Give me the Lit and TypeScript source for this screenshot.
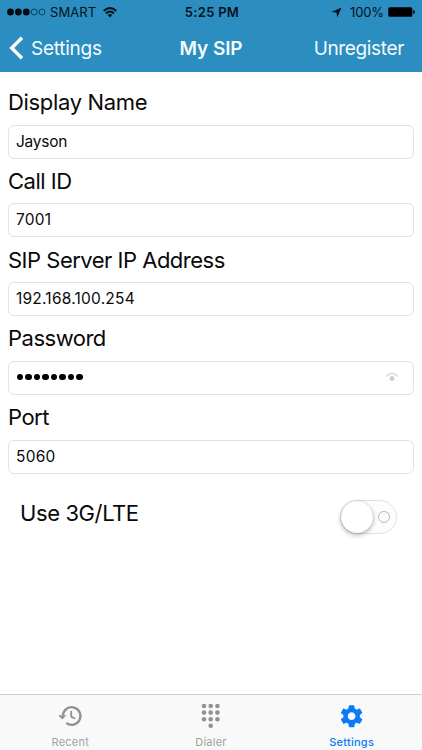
import { LitElement, html, css, svg } from "lit";
import { customElement, property } from "lit/decorators.js";

const clockIcon = svg`
  <path d="M5.9 12.2A8.8 8.8 0 1 1 9.3 20" fill="none" stroke="currentColor" stroke-width="2.3"/>
  <path d="M1.2 12.2H9.4L5.3 16.4Z" fill="currentColor"/>
  <path d="M14.2 8V13.6L18.2 15.8" fill="none" stroke="currentColor" stroke-width="1.8"/>`;

const dotsIcon = svg`${[
  [6, 3], [12.7, 3], [19.4, 3],
  [6, 9.6], [12.7, 9.6], [19.4, 9.6],
  [6, 16.2], [12.7, 16.2], [19.4, 16.2],
  [12.7, 22.8],
].map(([x, y]) => svg`<circle cx=${x} cy=${y} r="2.3" fill="currentColor"/>`)}`;

const gearIcon = svg`<path fill="currentColor" transform="translate(-.6 0) scale(1.1)" d="M19.43 12.98c.04-.32.07-.64.07-.98s-.03-.66-.07-.98l2.11-1.65c.19-.15.24-.42.12-.64l-2-3.46c-.12-.22-.39-.3-.61-.22l-2.49 1c-.52-.4-1.08-.73-1.69-.98l-.38-2.65C14.46 2.18 14.25 2 14 2h-4c-.25 0-.46.18-.49.42l-.38 2.65c-.61.25-1.17.59-1.69.98l-2.49-1c-.23-.09-.49 0-.61.22l-2 3.46c-.13.22-.07.49.12.64l2.11 1.65c-.04.32-.07.65-.07.98s.03.66.07.98l-2.11 1.65c-.19.15-.24.42-.12.64l2 3.46c.12.22.39.3.61.22l2.49-1c.52.4 1.08.73 1.69.98l.38 2.65c.03.24.24.42.49.42h4c.25 0 .46-.18.49-.42l.38-2.65c.61-.25 1.17-.59 1.69-.98l2.49 1c.23.09.49 0 .61-.22l2-3.46c.12-.22.07-.49-.12-.64l-2.11-1.65zM12 15.5c-1.93 0-3.5-1.57-3.5-3.5s1.57-3.5 3.5-3.5 3.5 1.57 3.5 3.5-1.57 3.5-3.5 3.5z"/>`;

@customElement("form-field")
class FormField extends LitElement {
  @property() label = "";
  @property() value = "";
  @property({ type: Boolean }) secret = false;

  static styles = css`
    :host { display: block; height: 78.75px; }
    .label { height: 33.5px; line-height: 22px; font-size: 22px; letter-spacing: -0.5px; white-space: nowrap; }
    :host([wide]) .label { letter-spacing: -0.33px; }
    .box {
      box-sizing: border-box; height: 34px; border: 1.3px solid #e3e3e3; border-radius: 6px;
      display: flex; align-items: center; justify-content: space-between;
      padding: 0 14px 1px 7px; font-size: 15.5px; letter-spacing: -0.25px;
    }
    .numeric { letter-spacing: 0.22px; }
    .dots { display: flex; gap: 2.1px; padding: 0 0 1px 1px; }
    .dots i { width: 6.4px; height: 6.4px; border-radius: 50%; background: #000; }
  `;

  render() {
    const numeric = /^[\d.]+$/.test(this.value);
    return html`
      <div class="label">${this.label}</div>
      <div class="box">
        ${this.secret
          ? html`<span class="dots">${[...this.value].map(() => html`<i></i>`)}</span>
              <svg width="14" height="10" viewBox="0 0 14 10">
                <path d="M1 4.6Q7-1.6 13 4.6" fill="none" stroke="#d9d9d9" stroke-width="1.4"/>
                <circle cx="7" cy="6.4" r="2.5" fill="#d0d0d0"/>
              </svg>`
          : html`<span class=${numeric ? "numeric" : "plain"}>${this.value}</span>`}
      </div>`;
  }
}

@customElement("app-root")
class AppRoot extends LitElement {
  static styles = css`
    :host {
      display: flex; flex-direction: column; height: 750px; width: 422px; overflow: hidden;
      background: #fff; color: #0a0a0a; font-family: Inter, "Liberation Sans", sans-serif;
    }
    svg { display: block; }
    header { height: 72px; background: #2b8dc0; flex: none; }
    .status, .nav { display: grid; grid-template-columns: 1fr auto 1fr; align-items: center; white-space: nowrap; }
    .status { height: 24px; padding: 0 7px; font-size: 13px; color: #04121b; }
    .left, .right { display: flex; align-items: center; }
    .right { justify-content: flex-end; }
    .carrier { margin: 0 7px 0 4px; letter-spacing: 0.1px; }
    .time { font-weight: 600; letter-spacing: 0.3px; padding-left: 2px; }
    .percent { margin: 0 4px 0 8px; letter-spacing: -0.1px; }
    .nav { height: 48px; padding: 0 18px 0 9px; box-sizing: border-box; color: #f3fbff; font-size: 19px; }
    .nav .left { gap: 7px; }
    .back { letter-spacing: -0.25px; }
    .action { letter-spacing: -0.35px; }
    .title { font-weight: 600; margin-left: 9px; letter-spacing: -0.1px; }
    main { flex: 1; padding: 19px 8px 0; }
    .row { display: flex; align-items: center; justify-content: space-between; height: 36px; margin-top: 14px; padding: 0 17px 0 12px; }
    .use { font-size: 22px; line-height: 28px; padding-bottom: 7px; letter-spacing: -0.4px; }
    .switch {
      box-sizing: border-box; width: 57px; height: 34px; border: 1.5px solid #e2e2e2; border-radius: 17px;
      display: flex; align-items: center; justify-content: space-between; padding-right: 6px; background: #fdfdfd;
    }
    .knob { width: 32px; height: 32px; border-radius: 50%; background: #fff; box-shadow: 0 2px 5px rgba(0,0,0,.3), 0 0 1px rgba(0,0,0,.2); }
    .off { box-sizing: border-box; width: 12px; height: 12px; border: 1.6px solid #b8b8b8; border-radius: 50%; }
    footer {
      box-sizing: border-box; height: 56px; flex: none; border-top: 1px solid #cfcfcf; background: #f9f9f9;
      display: grid; grid-template-columns: repeat(3, 1fr); color: #929292;
    }
    .tab { display: flex; flex-direction: column; align-items: center; padding-top: 8px; font-size: 11px; line-height: 14px; letter-spacing: 0.25px; }
    .tab svg { margin-bottom: 6px; }
    .tab span { color: #a1a1a1; }
    .active, .active span { color: #087bf5; }
    .active span { font-weight: 500; letter-spacing: 0.25px; }
  `;

  render() {
    return html`
      <header>
        <div class="status">
          <div class="left">
            <svg width="39" height="8" viewBox="0 0 39 8">
              ${[3.5, 11.4, 19.3].map((x) => svg`<circle cx=${x} cy="4" r="3.4" fill="#020b11"/>`)}
              ${[27.2, 35].map((x) => svg`<circle cx=${x} cy="4" r="3" fill="none" stroke="#082b3e" stroke-width=".8"/>`)}
            </svg>
            <span class="carrier">SMART</span>
            <svg width="14" height="11" viewBox="0 0 14 11" fill="none" stroke="#04121b" stroke-width="1.8">
              <path d="M.7 4Q7-2 13.3 4M3 6.5Q7 2.6 11 6.5"/>
              <path d="M4.8 8Q7 6.2 9.2 8L7 10.6Z" fill="#04121b" stroke="none"/>
            </svg>
          </div>
          <span class="time">5:25 PM</span>
          <div class="right">
            <svg width="11" height="11" viewBox="0 0 11 11"><path d="M10.5 .4L6.2 10.5 5.5 5.6 .4 4.9Z" fill="#04121b"/></svg>
            <span class="percent">100%</span>
            <svg width="27" height="10" viewBox="0 0 27 10">
              <rect x=".3" y=".3" width="24" height="9.4" rx="1.5" fill="#000"/>
              <path d="M25.1 3Q27 3.3 27 5T25.1 7Z" fill="#000"/>
            </svg>
          </div>
        </div>
        <div class="nav">
          <div class="left">
            <svg width="15" height="24" viewBox="0 0 15 24"><path d="M13 1.7L2.7 12 13 22.3" fill="none" stroke="#fff" stroke-width="3.4"/></svg>
            <span class="back">Settings</span>
          </div>
          <span class="title">My SIP</span>
          <div class="right"><span class="action">Unregister</span></div>
        </div>
      </header>
      <main>
        <form-field wide label="Display Name" value="Jayson"></form-field>
        <form-field label="Call ID" value="7001"></form-field>
        <form-field label="SIP Server IP Address" value="192.168.100.254"></form-field>
        <form-field label="Password" value="********" secret></form-field>
        <form-field label="Port" value="5060"></form-field>
        <div class="row">
          <span class="use">Use 3G/LTE</span>
          <div class="switch"><div class="knob"></div><div class="off"></div></div>
        </div>
      </main>
      <footer>
        <div class="tab"><svg width="26" height="26" viewBox="0 0 26 26">${clockIcon}</svg><span>Recent</span></div>
        <div class="tab"><svg width="26" height="26" viewBox="0 0 26 26">${dotsIcon}</svg><span>Dialer</span></div>
        <div class="tab active"><svg width="26" height="26" viewBox="0 0 26 26">${gearIcon}</svg><span>Settings</span></div>
      </footer>`;
  }
}
